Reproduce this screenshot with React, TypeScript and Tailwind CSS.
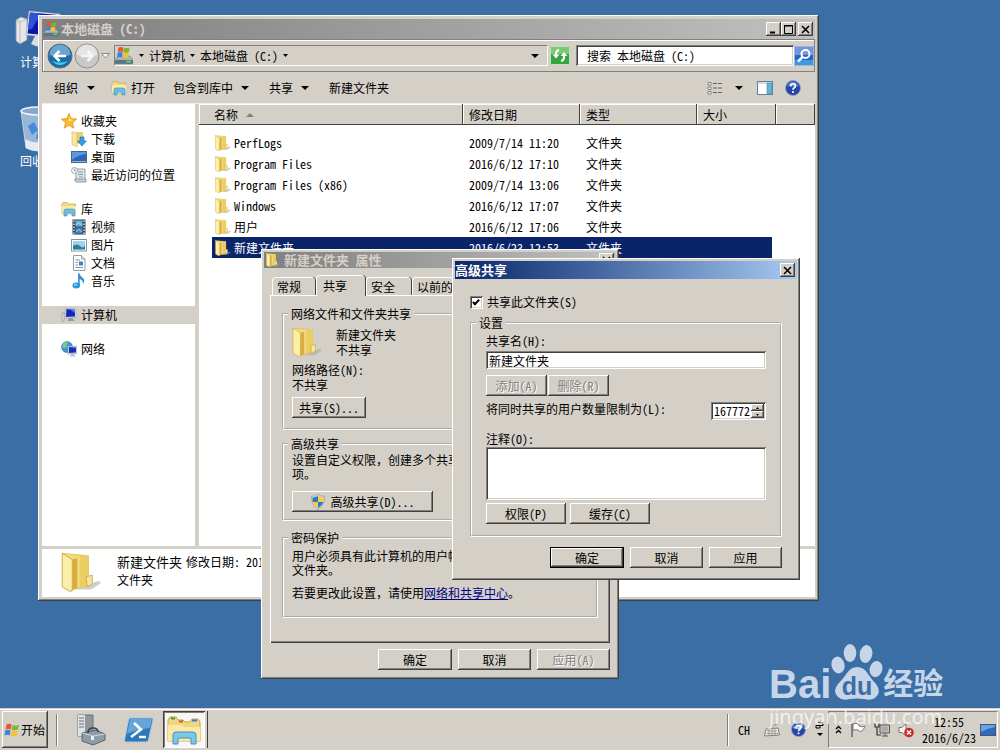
import { useState, type ReactNode } from "react"
import clsx from "clsx"

const raised = "bg-[#d4d0c8] shadow-[inset_-1px_-1px_0_#404040,inset_1px_1px_0_#ffffff,inset_-2px_-2px_0_#808080]"
const sunken = "bg-white shadow-[inset_1px_1px_0_#808080,inset_-1px_-1px_0_#ffffff,inset_2px_2px_0_#404040,inset_-2px_-2px_0_#d4d0c8]"

/* ---------- icons ---------- */

type IconProps = { className?: string }

function FolderIcon({ className = "h-4 w-4" }: IconProps) {
  return (
    <svg viewBox="0 0 32 32" className={clsx("shrink-0", className)}>
      <path d="M12 30 L30 23 L32 25 L24 30 Z" fill="#a8a8a0" opacity="0.55" />
      <path d="M1 1 L22 3 L22 27 L9 30 Z" fill="#f2db7e" stroke="#d8bc58" strokeWidth="0.6" />
      <path d="M15 3 L22 3.500 L22 27 L15 28.500 Z" fill="#eccd62" />
      <path d="M9 6 L13 5 L13 29 L8 31 Z" fill="#d9ae3e" />
      <path d="M1 1 L9 6 L9 31 L7 31.500 L1 28 Z" fill="#fbeea8" stroke="#cfae4a" strokeWidth="0.8" />
      <path d="M20 20 L25 18.500 L25 25.500 L21 28 Z" fill="#f8e69c" stroke="#c9a545" strokeWidth="0.7" />
    </svg>
  )
}

function DriveIcon({ className = "h-4 w-4" }: IconProps) {
  return (
    <svg viewBox="0 0 16 16" className={clsx("shrink-0", className)}>
      <path d="M0 11 L3 8 H13 L16 11 V15 H0 Z" fill="#a9b6bf" stroke="#6c7a85" strokeWidth="0.6" />
      <path d="M0 11.500 H16 V15 H0 Z" fill="#5f7482" />
      <path d="M10 13 H14" stroke="#5fe04a" strokeWidth="1.600" />
      <path d="M3 0.500 Q5 -0.500 7.500 0.500 L7 4.500 Q4.500 3.500 2.500 4.500 Z" fill="#e8552a" />
      <path d="M8 0.800 Q10 1.500 13 0.500 L12.300 4.600 Q9.500 5.500 7.400 4.700 Z" fill="#77b82d" />
      <path d="M2.300 5 Q4.500 4 6.800 5 L6.200 9.300 Q4 8.300 1.800 9.300 Z" fill="#3a86d8" />
      <path d="M7.300 5.200 Q9.500 6 12.200 5 L11.500 9.300 Q9 10.200 6.700 9.400 Z" fill="#f6c12b" />
    </svg>
  )
}

function LibraryIcon({ className = "h-4 w-4" }: IconProps) {
  return (
    <svg viewBox="0 0 16 16" className={clsx("shrink-0", className)}>
      <path d="M1 3 L2 1.500 H6 L7 3 H14.500 V13 H1 Z" fill="#f3da83" stroke="#c9a545" strokeWidth="0.7" />
      <path d="M1 5 H15 V13 H1 Z" fill="#fbeaa4" />
      <path d="M3 15 V10 Q3 8 5 8 H12 Q14 8 14 10 V15 H11 V12 H6 V15 Z" fill="#6cbce8" stroke="#3b8dc0" strokeWidth="0.6" />
    </svg>
  )
}

function StarIcon() {
  return (
    <svg viewBox="0 0 16 16" className="h-4 w-4 shrink-0">
      <path d="M8 0.500 L10.200 5.600 L15.700 6.100 L11.500 9.700 L12.800 15.200 L8 12.300 L3.200 15.200 L4.500 9.700 L0.300 6.100 L5.800 5.600 Z" fill="#fbb829" stroke="#d8892a" strokeWidth="0.7" />
      <path d="M8 3 L9.400 6.500 L13 7 L8 8.500 Z" fill="#ffe58a" />
    </svg>
  )
}

function DownloadsIcon() {
  return (
    <svg viewBox="0 0 16 16" className="h-4 w-4 shrink-0">
      <path d="M5 1 H12 V13 H5 Z" fill="#ecd070" />
      <path d="M1 0.500 L6 2.500 V15.500 L1 13.500 Z" fill="#fae9a0" stroke="#d3b451" strokeWidth="0.6" />
      <path d="M9 6 H13 V10 H15.500 L11 15 L6.500 10 H9 Z" fill="#3c9be0" stroke="#2268a8" strokeWidth="0.6" />
    </svg>
  )
}

function DesktopIcon() {
  return (
    <svg viewBox="0 0 16 16" className="h-4 w-4 shrink-0">
      <rect x="0.500" y="2.500" width="15" height="11" fill="#2c65b8" stroke="#52627a" />
      <path d="M1 3 H15 V5 Q7 6 1 11 Z" fill="#5b98dd" />
      <path d="M1 12.500 H15" stroke="#8eb4e0" />
    </svg>
  )
}

function RecentIcon() {
  return (
    <svg viewBox="0 0 16 16" className="h-4 w-4 shrink-0">
      <path d="M5 2 H14 V13 H5 Z" fill="#dfe8ee" stroke="#7b8b97" strokeWidth="0.8" />
      <path d="M7 5 H12 M7 7.500 H12 M8 10 H12" stroke="#7d9bb0" />
      <path d="M4 12 H15 V15 H5 Q3 14 4 12 Z" fill="#c6d3db" stroke="#7b8b97" strokeWidth="0.8" />
      <circle cx="3.500" cy="3.500" r="3" fill="#f5f8fa" stroke="#8795a0" strokeWidth="0.8" />
      <path d="M3.500 1.800 V3.600 H5" fill="none" stroke="#566" strokeWidth="0.7" />
    </svg>
  )
}

function VideoIcon() {
  return (
    <svg viewBox="0 0 16 16" className="h-4 w-4 shrink-0">
      <rect x="1.500" y="0.500" width="13" height="15" fill="#38424c" />
      <rect x="4.500" y="1.500" width="7" height="6" fill="#63b2e0" />
      <rect x="4.500" y="8.500" width="7" height="6" fill="#3b84bc" />
      <path d="M5 6 L8 3.500 L11 6.500 M5 13 L8 10.500 L11 13" stroke="#c9e5f5" fill="none" strokeWidth="0.8" />
      <path d="M3 1.500 V15 M13 1.500 V15" stroke="#dfe6ea" strokeWidth="1.400" strokeDasharray="1.500 1.500" />
    </svg>
  )
}

function PictureIcon() {
  return (
    <svg viewBox="0 0 16 16" className="h-4 w-4 shrink-0">
      <rect x="0.500" y="2.500" width="15" height="11.500" fill="#fff" stroke="#8b949b" />
      <rect x="2" y="4" width="12" height="8.500" fill="#9ed4f0" />
      <path d="M2 9 Q6 6 9 9 T14 8.500 V12.500 H2 Z" fill="#2c7f93" />
    </svg>
  )
}

function DocumentIcon() {
  return (
    <svg viewBox="0 0 16 16" className="h-4 w-4 shrink-0">
      <path d="M2.500 0.500 H10.500 L14 4 V15.500 H2.500 Z" fill="#fdfdfd" stroke="#8a9298" strokeWidth="0.9" />
      <path d="M10.500 0.500 V4 H14" fill="#dde3e7" stroke="#8a9298" strokeWidth="0.8" />
      <path d="M4.500 5 H9 M4.500 7.500 H7 M4.500 10 H7 M4.500 12.500 H12" stroke="#7b97ad" />
      <rect x="8" y="6.500" width="4" height="4" fill="#4583b8" />
    </svg>
  )
}

function MusicIcon() {
  return (
    <svg viewBox="0 0 16 16" className="h-4 w-4 shrink-0">
      <path d="M7 0.500 H8.700 Q9 3 12 5 Q14.500 7.500 12 11 Q12.500 7.500 8.700 6 V12.500 H7 Z" fill="#2e95dc" />
      <ellipse cx="5.300" cy="12.500" rx="3.800" ry="2.900" fill="#2e95dc" />
      <ellipse cx="4.500" cy="11.800" rx="1.600" ry="1" fill="#9bd4f6" />
    </svg>
  )
}

function ComputerIcon() {
  return (
    <svg viewBox="0 0 16 16" className="h-4 w-4 shrink-0">
      <path d="M1 6 L3 5 V14 L1 14.500 Z" fill="#dfe3e6" stroke="#767e84" strokeWidth="0.500" />
      <path d="M4.500 1 L15 2 V10.500 L4 11 Z" fill="#e8ecf0" stroke="#8a929a" strokeWidth="0.500" />
      <path d="M5.400 2 L14 2.800 V9.600 L5 10 Z" fill="#1526bd" />
      <path d="M9 2.400 L14 2.800 V6 Z" fill="#5a76e6" />
      <path d="M8 11 H11.500 L13.500 14 H6.500 Z" fill="#8e989f" />
    </svg>
  )
}

function NetworkIcon() {
  return (
    <svg viewBox="0 0 16 16" className="h-4 w-4 shrink-0">
      <circle cx="6" cy="6" r="5.500" fill="#3a9ad2" stroke="#22688f" strokeWidth="0.500" />
      <path d="M2 2.500 Q5 0 7 2 Q5 4 6 6 Q3 8 1 6 Z" fill="#7cc98a" />
      <path d="M7 5 L16 5.500 V12.500 L7 13 Z" fill="#dfe5ea" stroke="#7d868e" strokeWidth="0.500" />
      <path d="M8 6 L15 6.400 V11.600 L8 12 Z" fill="#1a2dc4" />
      <path d="M10 13 H13 L14.500 15.500 H9 Z" fill="#b9c2c9" />
    </svg>
  )
}

function FlagLogo({ className = "h-4 w-4" }: IconProps) {
  return (
    <svg viewBox="0 0 16 16" className={clsx("shrink-0", className)}>
      <path d="M2.500 2.500 Q5 1 7.500 2.500 L6.700 7.500 Q4 6 1.500 7.500 Z" fill="#e8582c" />
      <path d="M8.500 3 Q11 4.300 15 2.700 L14 7.500 Q11 9 7.700 7.700 Z" fill="#7fb83a" />
      <path d="M1.300 8.500 Q4 7 6.500 8.500 L5.700 13.500 Q3 12 0.500 13.500 Z" fill="#3a84d6" />
      <path d="M7.500 8.800 Q10.500 10 13.800 8.700 L12.800 13.500 Q10 15 6.700 13.800 Z" fill="#f8c22c" />
    </svg>
  )
}

function ShieldIcon() {
  return (
    <svg viewBox="0 0 16 16" className="h-4 w-4 shrink-0">
      <path d="M8 0.500 Q11 2.500 14.500 2.300 Q15 11 8 15.500 Q1 11 1.500 2.300 Q5 2.500 8 0.500 Z" fill="#d7dce0" stroke="#868e95" strokeWidth="0.6" />
      <path d="M8 2 V8 H2.700 Q2.300 5.500 2.600 3.400 Q5.500 3.500 8 2 Z" fill="#2f77c4" />
      <path d="M8 2 V8 H13.300 Q13.700 5.500 13.400 3.400 Q10.500 3.500 8 2 Z" fill="#f4cf3f" />
      <path d="M8 8 V14.200 Q3.800 11.500 2.700 8 Z" fill="#f4cf3f" />
      <path d="M8 8 V14.200 Q12.200 11.500 13.300 8 Z" fill="#2f77c4" />
    </svg>
  )
}

function HelpIcon({ className = "h-4 w-4" }: IconProps) {
  return (
    <svg viewBox="0 0 16 16" className={clsx("shrink-0", className)}>
      <circle cx="8" cy="8" r="7.500" fill="#2546a8" stroke="#8ea0c8" strokeWidth="0.8" />
      <path d="M2 6 Q4 1.500 8 1.500 T14 6 Q8 8 2 6 Z" fill="#6f8ee0" opacity="0.7" />
      <path d="M5.600 6.200 Q5.600 3.900 8 3.900 T10.400 6 Q10.400 7.300 9 8 Q8 8.600 8 9.800" fill="none" stroke="#fff" strokeWidth="1.700" />
      <circle cx="8" cy="12" r="1.100" fill="#fff" />
    </svg>
  )
}

function Caret({ className = "" }: IconProps) {
  return (
    <svg viewBox="0 0 8 4" className={clsx("h-1 w-2 shrink-0", className)}>
      <path d="M0 0 H8 L4 4 Z" fill="#000" />
    </svg>
  )
}

/* ---------- shared pieces ---------- */

type WinButtonProps = { children: ReactNode; className?: string; disabled?: boolean; primary?: boolean }

function WinButton({ children, className = "", disabled, primary }: WinButtonProps) {
  return (
    <button
      type="button"
      disabled={disabled}
      className={clsx(
        "flex h-[21px] items-center justify-center gap-1 whitespace-nowrap",
        raised,
        primary && "border border-black",
        disabled && "text-[#808080] [text-shadow:1px_1px_0_#ffffff]",
        className
      )}
    >
      {children}
    </button>
  )
}

function CaptionButton({ kind }: { kind: "min" | "max" | "close" }) {
  const labels = { min: "最小化", max: "最大化", close: "关闭" }
  return (
    <button type="button" aria-label={labels[kind]} className={clsx("flex h-[14px] w-[15px] items-center justify-center", kind === "close" && "ml-[2px]", raised)}>
      <svg viewBox="0 0 9 9" className="h-[9px] w-[9px]" fill="none" stroke="#000">
        {kind === "min" && <path d="M1 7.500 H6" strokeWidth="2" />}
        {kind === "max" && <path d="M0.500 1 H8.500 M0.500 0 V8.500 H8.500 V0 M0.500 0.500 H8.500" />}
        {kind === "close" && <path d="M1 1 L8 8 M8 1 L1 8" strokeWidth="1.600" />}
      </svg>
    </button>
  )
}

function Group({ title, className = "", children }: { title: string; className?: string; children: ReactNode }) {
  return (
    <fieldset className={clsx("min-w-0 border-2 border-white px-2 [border-style:groove]", className)}>
      <legend className="-ml-1 px-[3px] leading-[14px]">{title}</legend>
      {children}
    </fieldset>
  )
}

/* ---------- explorer window ---------- */

const tree = [
  {
    name: "收藏夹",
    icon: <StarIcon />,
    items: [
      { name: "下载", icon: <DownloadsIcon /> },
      { name: "桌面", icon: <DesktopIcon /> },
      { name: "最近访问的位置", icon: <RecentIcon /> },
    ],
  },
  {
    name: "库",
    icon: <LibraryIcon />,
    items: [
      { name: "视频", icon: <VideoIcon /> },
      { name: "图片", icon: <PictureIcon /> },
      { name: "文档", icon: <DocumentIcon /> },
      { name: "音乐", icon: <MusicIcon /> },
    ],
  },
  { name: "计算机", icon: <ComputerIcon />, items: [], selected: true },
  { name: "网络", icon: <NetworkIcon />, items: [] },
]

const files = [
  { name: "PerfLogs", date: "2009/7/14 11:20" },
  { name: "Program Files", date: "2016/6/12 17:10" },
  { name: "Program Files (x86)", date: "2009/7/14 13:06" },
  { name: "Windows", date: "2016/6/12 17:07" },
  { name: "用户", date: "2016/6/12 17:06" },
  { name: "新建文件夹", date: "2016/6/23 12:53", selected: true },
]

function AddressBar() {
  return (
    <div className="flex h-[33px] items-center border border-[#808080] pl-1 shadow-[inset_1px_1px_0_#ffffff]">
      <button type="button" aria-label="后退" className="shrink-0">
        <svg viewBox="0 0 26 26" className="h-[26px] w-[26px]">
          <circle cx="13" cy="13" r="12" fill="#1c6ea8" stroke="#5b6b78" />
          <path d="M2.500 12 A10.500 10.500 0 0 1 23.500 12 Q13 15 2.500 12 Z" fill="#6aa3cb" />
          <path d="M5 18 Q13 26 21 18 Q13 21 5 18 Z" fill="#3fd0f0" />
          <path d="M19 13 H8 M12.500 8 L7.500 13 L12.500 18" fill="none" stroke="#fff" strokeWidth="2.600" />
        </svg>
      </button>
      <button type="button" aria-label="前进" className="ml-px shrink-0">
        <svg viewBox="0 0 26 26" className="h-[26px] w-[26px]">
          <circle cx="13" cy="13" r="12" fill="#c9c9c7" stroke="#8e8e8c" />
          <path d="M2.500 12 A10.500 10.500 0 0 1 23.500 12 Q13 15 2.500 12 Z" fill="#e4e4e2" />
          <path d="M7 13 H18 M13.500 8 L18.500 13 L13.500 18" fill="none" stroke="#f6f6f6" strokeWidth="2.600" />
        </svg>
      </button>
      <svg viewBox="0 0 9 6" className="ml-px h-[6px] w-[9px] shrink-0">
        <path d="M0.500 0.500 H8.500 L4.500 5 Z" fill="#f4f4f2" stroke="#8a8a88" />
      </svg>
      <div className="ml-1 flex h-[21px] flex-1 items-center border border-[#808080] border-r-white border-b-white pr-2">
        <DriveIcon className="mr-[6px] h-[18px] w-[18px]" />
        <svg viewBox="0 0 5 3" className="h-[3px] w-[5px]"><path d="M0 0 H5 L2.500 3 Z" /></svg>
        <button type="button" className="mx-[5px]">计算机</button>
        <svg viewBox="0 0 5 3" className="h-[3px] w-[5px]"><path d="M0 0 H5 L2.500 3 Z" /></svg>
        <button type="button" className="mx-[5px]">本地磁盘 (C:)</button>
        <svg viewBox="0 0 5 3" className="h-[3px] w-[5px]"><path d="M0 0 H5 L2.500 3 Z" /></svg>
        <Caret className="ml-auto" />
      </div>
      <button type="button" aria-label="刷新" className="mx-[2px] shrink-0">
        <svg viewBox="0 0 20 19" className="h-[19px] w-5">
          <rect x="0.500" y="0.500" width="19" height="18" rx="1" fill="#35a63e" stroke="#c5e0c0" />
          <rect x="1" y="1" width="18" height="7" fill="#7cc878" />
          <path d="M9 4 Q6 4.500 6 8 V10" fill="none" stroke="#fff" strokeWidth="2" />
          <path d="M2.500 8.500 H9.500 L6 12.500 Z" fill="#fff" />
          <path d="M11 15 Q14 14.500 14 11 V9" fill="none" stroke="#fff" strokeWidth="2" />
          <path d="M10.500 10 H17.500 L14 6 Z" fill="#fff" />
        </svg>
      </button>
      <input aria-label="搜索" defaultValue="搜索 本地磁盘 (C:)" className={clsx("ml-1 h-[21px] w-[218px] px-[11px]", sunken)} />
      <button type="button" aria-label="开始搜索" className="shrink-0">
        <svg viewBox="0 0 20 20" className="h-5 w-5">
          <rect x="0.500" y="0.500" width="19" height="19" fill="#2c62c4" stroke="#9fb4d8" />
          <rect x="1" y="1" width="18" height="8" fill="#6d98dd" />
          <rect x="1" y="14" width="18" height="5" fill="#3b9be0" />
          <circle cx="11.500" cy="8" r="4" fill="none" stroke="#fff" strokeWidth="2" />
          <path d="M8.500 11 L4 15.500" stroke="#fff" strokeWidth="2.500" />
        </svg>
      </button>
    </div>
  )
}

function Toolbar() {
  return (
    <div className="flex h-[31px] items-center px-3">
      <button type="button" className="mr-4 flex items-center gap-[9px]">组织<Caret /></button>
      <button type="button" className="mr-[18px] flex items-center gap-1"><LibraryIcon />打开</button>
      <button type="button" className="mr-5 flex items-center gap-2">包含到库中<Caret /></button>
      <button type="button" className="mr-5 flex items-center gap-2">共享<Caret /></button>
      <button type="button">新建文件夹</button>
      <button type="button" className="ml-auto flex items-center gap-3" aria-label="更改视图">
        <svg viewBox="0 0 16 14" className="h-[14px] w-4">
          <path d="M1 1.500 H4 V4 H1 Z M1 6 H4 V8.500 H1 Z M1 10.500 H4 V13 H1 Z" fill="#fff" stroke="#7a8088" />
          <path d="M6 2.500 H10 M11 2.500 H15 M6 7 H10 M11 7 H15 M6 11.500 H10 M11 11.500 H15" stroke="#5f666e" />
        </svg>
        <Caret />
      </button>
      <button type="button" className="ml-[14px]" aria-label="预览窗格">
        <svg viewBox="0 0 16 14" className="h-[14px] w-4">
          <rect x="0.500" y="0.500" width="15" height="13" fill="#fff" stroke="#6c7f92" />
          <path d="M1 2 H15" stroke="#a9bccd" />
          <rect x="10" y="2" width="5" height="11" fill="#62b4d8" stroke="#4a8fb5" strokeWidth="0.6" />
        </svg>
      </button>
      <button type="button" className="mr-[2px] ml-3" aria-label="帮助"><HelpIcon /></button>
    </div>
  )
}

function HeadCell({ children, className = "" }: { children?: ReactNode; className?: string }) {
  return (
    <th scope="col" className="p-0 text-left font-normal">
      <div className={clsx("mb-[7px] flex h-[21px] items-center bg-[#d4d0c8] px-[6px] shadow-[inset_-1px_-1px_0_#404040,inset_1px_1px_0_#ffffff]", className)}>
        {children}
      </div>
    </th>
  )
}

function FileTable() {
  return (
    <table className="w-full table-fixed border-separate border-spacing-0">
      <colgroup>
        <col />
        <col className="w-[117px]" />
        <col className="w-[117px]" />
        <col className="w-[79px]" />
        <col className="w-[39px]" />
      </colgroup>
      <thead>
        <tr>
          <HeadCell className="gap-2 pl-[15px]">
            名称
            <svg viewBox="0 0 8 4" className="h-1 w-2"><path d="M0 4 H8 L4 0 Z" fill="#808080" /></svg>
          </HeadCell>
          <HeadCell>修改日期</HeadCell>
          <HeadCell>类型</HeadCell>
          <HeadCell>大小</HeadCell>
          <HeadCell />
        </tr>
      </thead>
      <tbody>
        {files.map((file) => {
          const cell = clsx("flex h-[21px] items-center px-[6px] whitespace-nowrap", file.selected && "bg-[#0a246a] text-white")
          return (
            <tr key={file.name}>
              <td className="p-0 pl-[13px]">
                <div className={clsx(cell, "gap-[3px] pl-[3px]")}><FolderIcon />{file.name}</div>
              </td>
              <td className="p-0"><div className={cell}>{file.date}</div></td>
              <td className="p-0"><div className={cell}>文件夹</div></td>
              <td className="p-0 pr-1"><div className={cell} /></td>
              <td className="p-0" />
            </tr>
          )
        })}
      </tbody>
    </table>
  )
}

function ExplorerWindow() {
  return (
    <section className={clsx("absolute top-[15px] left-[38px] flex h-[586px] w-[781px] flex-col p-1", raised)}>
      <header className="flex h-5 items-center bg-linear-to-r from-[#808080] to-[#c0c0c0] pr-[2px] pl-[2px]">
        <DriveIcon className="h-[15px] w-[15px]" />
        <h1 className="mr-auto pl-[2px] text-[13px] font-bold text-[#d4d0c8]">本地磁盘 (C:)</h1>
        <CaptionButton kind="min" />
        <CaptionButton kind="max" />
        <CaptionButton kind="close" />
      </header>
      <AddressBar />
      <Toolbar />
      <div className="flex flex-1 gap-1 border-t border-[#f0eee8]">
        <nav className="flex w-[153px] shrink-0 flex-col gap-4 bg-white pt-2">
          {tree.map((node) => (
            <ul key={node.name}>
              <li className={clsx("flex h-[18px] items-center gap-1 pl-[19px]", node.selected && "bg-[#d4d0c8]")}>
                {node.icon}
                {node.name}
              </li>
              {node.items.map((item) => (
                <li key={item.name} className="flex h-[18px] items-center gap-1 pl-[29px]">
                  {item.icon}
                  {item.name}
                </li>
              ))}
            </ul>
          ))}
        </nav>
        <div className="min-w-0 flex-1 bg-white">
          <FileTable />
        </div>
      </div>
      <footer className="mt-[3px] flex h-[48px] bg-white pl-[19px]">
        <FolderIcon className="mt-[2px] h-[42px] w-10" />
        <div className="pt-1 pl-4 leading-[18px]">
          <p className="flex gap-[4px]"><span className="text-[13px]">新建文件夹</span>修改日期: 2016/6/23 12:53</p>
          <p>文件夹</p>
        </div>
      </footer>
    </section>
  )
}

/* ---------- folder properties ---------- */

function Tab({ children, active, className = "" }: { children: ReactNode; active?: boolean; className?: string }) {
  return (
    <button
      type="button"
      role="tab"
      aria-selected={!!active}
      className={clsx(
        "rounded-t-sm border-t border-l border-white bg-[#d4d0c8] text-left whitespace-nowrap shadow-[1px_0_0_#404040]",
        active ? "z-10 -mb-px h-[21px] px-[6px]" : "h-[18px] px-1",
        className
      )}
    >
      {children}
    </button>
  )
}

function PropertiesWindow() {
  return (
    <section className={clsx("absolute top-[249px] left-[261px] w-[358px] p-[3px]", raised)}>
      <header className="flex h-4 items-center gap-1 bg-linear-to-r from-[#808080] to-[#c0c0c0] pr-[2px] pl-[2px]">
        <FolderIcon className="h-[14px] w-[14px]" />
        <h2 className="mr-auto text-[13px] font-bold text-[#d4d0c8]">新建文件夹 属性</h2>
        <CaptionButton kind="close" />
      </header>
      <div className="px-[6px] pt-[7px] pb-[6px]">
        <div role="tablist" className="flex items-end gap-px pl-[2px]">
          <Tab className="w-[43px]">常规</Tab>
          <Tab active className="w-[49px]">共享</Tab>
          <Tab className="w-[45px]">安全</Tab>
          <Tab className="w-[72px]">以前的版本</Tab>
          <Tab className="w-[48px]">自定义</Tab>
        </div>
        <div className="h-[348px] overflow-hidden px-3 pt-3 shadow-[inset_1px_1px_0_#ffffff,inset_-1px_-1px_0_#404040,inset_-2px_-2px_0_#808080]">
          <Group title="网络文件和文件夹共享" className="h-[123px]">
            <div className="flex pt-[6px]">
              <FolderIcon className="h-[30px] w-[30px]" />
              <p className="pl-[14px] leading-[15px]">新建文件夹<br />不共享</p>
            </div>
            <p className="pt-[5px] leading-[15px]">网络路径(N):<br />不共享</p>
            <WinButton className="mt-[5px] w-[74px]">共享(S)...</WinButton>
          </Group>
          <Group title="高级共享" className="mt-[7px] h-[84px]">
            <p className="pt-[2px] leading-[14px] whitespace-nowrap">设置自定义权限，创建多个共享，并设置其他选<br />项。</p>
            <WinButton className="mt-[10px] w-[141px]"><ShieldIcon />高级共享(D)...</WinButton>
          </Group>
          <Group title="密码保护" className="mt-[10px] h-[87px]">
            <p className="pt-1 leading-[14px] whitespace-nowrap">用户必须具有此计算机的用户帐户和密码才能访问<br />文件夹。</p>
            <p className="pt-[9px] leading-[14px] whitespace-nowrap">
              若要更改此设置，请使用<a href="#network" className="text-[#00007f] underline">网络和共享中心</a>。
            </p>
          </Group>
        </div>
        <div className="flex justify-end gap-[6px] pt-[6px]">
          <WinButton className="w-[74px]">确定</WinButton>
          <WinButton className="w-[73px]">取消</WinButton>
          <WinButton className="w-[73px]" disabled>应用(A)</WinButton>
        </div>
      </div>
    </section>
  )
}

/* ---------- advanced sharing dialog ---------- */

function AdvancedSharingDialog() {
  const [shared, setShared] = useState(true)

  return (
    <section role="dialog" aria-label="高级共享" className={clsx("absolute top-[258px] left-[452px] w-[348px] p-[3px]", raised)}>
      <header className="flex h-[18px] items-center bg-linear-to-r from-[#0a246a] to-[#a6caf0] pr-[2px]">
        <h2 className="mr-auto text-[13px] font-bold text-white">高级共享</h2>
        <CaptionButton kind="close" />
      </header>
      <div className="px-[15px] pt-[15px] pb-[9px]">
        <label className="flex h-4 items-center gap-1">
          <input
            type="checkbox"
            checked={shared}
            onChange={(e) => setShared(e.target.checked)}
            className={clsx(
              "h-[13px] w-[13px] appearance-none checked:before:mt-[2px] checked:before:ml-1 checked:before:block checked:before:h-[7px] checked:before:w-1 checked:before:rotate-45 checked:before:border-r-2 checked:before:border-b-2 checked:before:border-black",
              sunken
            )}
          />
          共享此文件夹(S)
        </label>
        <Group title="设置" className="mt-[6px] pb-[11px]">
          <div className="px-[6px]">
            <label htmlFor="share-name" className="mt-1 block leading-[14px]">共享名(H):</label>
            <input id="share-name" defaultValue="新建文件夹" className={clsx("mt-[3px] block h-[18px] w-full px-[3px]", sunken)} />
            <div className="mt-[6px] flex gap-px">
              <WinButton className="w-[61px]" disabled>添加(A)</WinButton>
              <WinButton className="w-[61px]" disabled>删除(R)</WinButton>
            </div>
            <div className="mt-[6px] flex justify-between">
              <label htmlFor="user-limit" className="leading-[14px]">将同时共享的用户数量限制为(L):</label>
              <div className={clsx("flex h-[18px] w-[55px] p-[2px]", sunken)}>
                <input id="user-limit" defaultValue="167772" className="w-[38px] pl-px" />
                <div className="flex flex-1 flex-col">
                  <button type="button" aria-label="增加" className={clsx("flex h-[7px] items-center justify-center", raised)}>
                    <svg viewBox="0 0 3 2" className="h-[2px] w-[3px]"><path d="M0 2 H3 L1.500 0 Z" /></svg>
                  </button>
                  <button type="button" aria-label="减少" className={clsx("flex h-[7px] items-center justify-center", raised)}>
                    <svg viewBox="0 0 3 2" className="h-[2px] w-[3px]"><path d="M0 0 H3 L1.500 2 Z" /></svg>
                  </button>
                </div>
              </div>
            </div>
            <label htmlFor="comment" className="mt-3 block leading-[14px]">注释(O):</label>
            <textarea id="comment" className={clsx("mt-px block h-[53px] w-full resize-none p-[3px]", sunken)} />
            <div className="mt-[3px] flex gap-1">
              <WinButton className="w-20">权限(P)</WinButton>
              <WinButton className="w-20">缓存(C)</WinButton>
            </div>
          </div>
        </Group>
        <div className="mt-[10px] flex justify-end gap-[6px]">
          <WinButton className="w-[74px]" primary>确定</WinButton>
          <WinButton className="w-[73px]">取消</WinButton>
          <WinButton className="w-[73px]">应用</WinButton>
        </div>
      </div>
    </section>
  )
}

/* ---------- desktop and taskbar ---------- */

function DesktopShortcuts() {
  return (
    <div className="flex w-[76px] flex-col items-center pt-[10px] text-white">
      <svg viewBox="0 0 46 44" className="h-11 w-[46px]">
        <path d="M1 10 L6 7 L12 9 V30 L5 34 L1 31 Z" fill="#e4e7ea" stroke="#8c949b" strokeWidth="0.8" />
        <path d="M5 12 V34 M1 10 L5 12 L12 9" fill="none" stroke="#a9b0b6" strokeWidth="0.8" />
        <path d="M14 1 L45 4 L43 28 L11 25 Z" fill="#e9edf1" stroke="#98a1a9" strokeWidth="0.6" />
        <path d="M15 2.500 L43 5 L41 26 L12.500 23.500 Z" fill="#0a16a8" />
        <path d="M15 2.500 L26 3.500 L17 19 L13 20 Z" fill="#3450d8" />
        <path d="M20 26 H32 L36 34 Q26 40 16 34 Z" fill="#d9dee2" />
      </svg>
      <span className="mb-9">计算机</span>
      <svg viewBox="0 0 36 46" className="h-[46px] w-9">
        <path d="M1 5 H35 L30 42 Q18 48 6 42 Z" fill="#b8d0e4" opacity="0.75" stroke="#e8f2fa" />
        <ellipse cx="18" cy="5" rx="17" ry="4" fill="#86a9c8" stroke="#eef6fc" strokeWidth="1.500" />
        <path d="M8 20 L14 16 L18 24 L12 29 Z M18 24 L26 19 L28 29 L16 33 Z" fill="#2f7fe0" opacity="0.8" />
        <path d="M5 33 Q18 40 31 33 L30 42 Q18 48 6 42 Z" fill="#eef4f8" opacity="0.85" />
      </svg>
      <span className="pt-px">回收站</span>
    </div>
  )
}

function Watermark() {
  return (
    <div className="pointer-events-none absolute right-[55px] bottom-[21px] z-20 w-[176px] text-[#c6d6e8]">
      <div className="flex h-[62px] items-end font-['Liberation_Sans','Noto_Sans_CJK_SC',sans-serif] font-bold">
        <span className="text-[40px] leading-[42px]">Bai</span>
        <svg viewBox="0 0 52 58" className="mb-[4px] h-[58px] w-[52px] shrink-0">
          <g fill="currentColor">
            <ellipse cx="7" cy="22" rx="6.500" ry="8.500" transform="rotate(-12 7 22)" />
            <ellipse cx="19" cy="10" rx="6.300" ry="9" />
            <ellipse cx="35" cy="11" rx="6.300" ry="9" transform="rotate(10 35 11)" />
            <ellipse cx="45" cy="26" rx="6.300" ry="8" transform="rotate(16 45 26)" />
            <path d="M26 24 Q33 24 37 31 Q41 37 45 41 Q51 49 44 55 Q40 58 33 56 Q26 55 19 56 Q11 58 7 54 Q1 48 7 41 Q12 36 16 30 Q20 24 26 24 Z" />
          </g>
          <text x="26" y="52" textAnchor="middle" fontSize="25" fill="#3a6ea5">du</text>
        </svg>
        <span className="text-[30px] leading-[42px] whitespace-nowrap">经验</span>
      </div>
      <div className="font-['Noto_Sans',sans-serif] text-xl leading-6 text-white/70">jingyan.baidu.com</div>
    </div>
  )
}

function Taskbar() {
  return (
    <footer className="flex h-[42px] shrink-0 items-center border-t border-[#d4d0c8] bg-[#d4d0c8] px-[2px] shadow-[inset_0_1px_0_#ffffff]">
      <button type="button" className={clsx("flex h-[37px] w-[46px] items-center gap-px pl-[2px]", raised)}>
        <FlagLogo />
        开始
      </button>
      <div className="ml-2 h-8 w-[2px] border-r border-white bg-[#808080]" />
      <button type="button" aria-label="服务器管理器" className="ml-[18px]">
        <svg viewBox="0 0 30 32" className="h-8 w-[30px]">
          <path d="M2 1 H17 V22 H2 Z" fill="#8f979c" stroke="#6a7176" />
          <path d="M2 1 H9 V22 H2 Z" fill="#dde2e5" />
          <path d="M3 4 H8 M3 7 H8 M3 10 H8 M3 13 H8" stroke="#6d757b" />
          <path d="M6 19 L20 16 L29 20 V26 L17 31 L6 27 Z" fill="#8c9daa" stroke="#56636d" />
          <path d="M6 19 L17 22 L29 20" fill="none" stroke="#c9d5dd" />
          <path d="M12 19 Q12 14 17 14 T22 18" fill="none" stroke="#39424a" strokeWidth="1.600" />
          <rect x="15" y="22" width="3" height="4" fill="#e8eef2" />
        </svg>
      </button>
      <button type="button" aria-label="PowerShell" className="ml-[18px]">
        <svg viewBox="0 0 30 26" className="h-[26px] w-[30px]">
          <path d="M6 1 H28 Q29.500 1 29 3 L24.500 23 Q24 25 22 25 H2 Q0 25 0.500 23 L4.500 3 Q5 1 6 1 Z" fill="#2f78b8" stroke="#a9cbe6" />
          <path d="M6 2 H28 L26 11 Q14 12 3 17 Z" fill="#67a5d8" />
          <path d="M10 6 L17 12.500 L7 20" fill="none" stroke="#fff" strokeWidth="2.600" />
          <path d="M15 20 H22" stroke="#fff" strokeWidth="2.400" />
        </svg>
      </button>
      <button type="button" aria-label="资源管理器" className="ml-[9px] flex h-[37px] w-[42px] items-center justify-center bg-[#f8f7f5] shadow-[inset_1px_1px_0_#404040,inset_-1px_-1px_0_#ffffff,inset_2px_2px_0_#808080,2px_0_0_#d4d0c8,3px_0_0_#404040]">
        <svg viewBox="0 0 34 30" className="h-[30px] w-[34px]">
          <path d="M1 26 V5 L3 2 H9 L11 5 H16 L18 7 H23 L25 4 H31 L33 7 V26 Z" fill="#f0d67c" stroke="#c4a24a" />
          <path d="M1 10 H15 L17 12 H33 V26 H1 Z" fill="#fae9a6" />
          <path d="M4 3.500 H8" stroke="#3c9c46" strokeWidth="2" />
          <path d="M12 6.500 H16" stroke="#d0533a" strokeWidth="2" />
          <path d="M25 5.500 H30" stroke="#3b7ccc" strokeWidth="2" />
          <path d="M6 29 V20 Q6 17 9 17 H26 Q29 17 29 20 V29 H24 V23 H11 V29 Z" fill="#7cc6ea" stroke="#3f93c2" />
        </svg>
      </button>

      <div className="ml-auto h-8 w-[2px] border-r border-white bg-[#808080]" />
      <span className="ml-[9px]">CH</span>
      <svg viewBox="0 0 16 14" className="ml-[14px] h-[14px] w-4">
        <path d="M2 6 L14 5 L15.500 12 L0.500 13 Z" fill="#e8e8e6" stroke="#808080" />
        <path d="M3 8 H13 M2.500 10.500 H14 M5 6 V12 M8 6 V12 M11 6 V12" stroke="#909090" strokeWidth="0.8" />
        <path d="M8 5 Q8 2 13 1.500" fill="none" stroke="#808080" />
      </svg>
      <HelpIcon className="ml-[11px] h-[15px] w-[15px]" />
      <svg viewBox="0 0 9 16" className="ml-[9px] h-4 w-[9px]">
        <path d="M3 0.500 H8 V3.500 H5 M1 3.500 H5 V6 H1 Z" fill="none" stroke="#000" />
        <path d="M2 11 H8 L5 14 Z" />
      </svg>
      <div className="ml-1 flex h-[37px] items-center gap-2 border border-t-[#808080] border-r-white border-b-white border-l-[#808080] pr-px pl-[6px]">
        <svg viewBox="0 0 7 9" className="h-[9px] w-[7px]" fill="none" stroke="#000" strokeWidth="1.300">
          <path d="M1 4 L3.500 1.500 L6 4 M1 8 L3.500 5.500 L6 8" />
        </svg>
        <svg viewBox="0 0 16 16" className="h-4 w-4">
          <path d="M2 1 V15" stroke="#666" strokeWidth="1.500" />
          <path d="M3 2 Q6 0.500 9 2.500 V4 Q12 5.500 15 4 Q14 8 11 9.500 Q9 9.500 8 8 Q5 7 3 8.500 Z" fill="#fff" stroke="#777" />
        </svg>
        <svg viewBox="0 0 16 16" className="h-4 w-4">
          <path d="M6 3 H15.500 V11 H6 Z" fill="#c9c9c7" stroke="#555" />
          <path d="M7.500 4.500 H14 V9.500 H7.500 Z" fill="#a9a9a7" />
          <path d="M8 14 H14 M11 11 V14" stroke="#555" />
          <path d="M1 1 V5 H5 V1 M3 5 V13 H7" fill="none" stroke="#333" strokeWidth="1.200" />
        </svg>
        <svg viewBox="0 0 16 16" className="h-4 w-4">
          <path d="M1 5.500 H4 L8 1.500 V14 L4 10.500 H1 Z" fill="#f2f2f0" stroke="#777" />
          <circle cx="11" cy="10.500" r="4.800" fill="#cf2b25" />
          <path d="M9 8.500 L13 12.500 M13 8.500 L9 12.500" stroke="#fff" strokeWidth="1.500" />
        </svg>
        <div className="text-center leading-4">
          <div>12:55</div>
          <div>2016/6/23</div>
        </div>
        <svg viewBox="0 0 16 12" className="-ml-1 h-3 w-4">
          <rect x="0.500" y="0.500" width="15" height="11" fill="#2d6ac0" stroke="#47566b" />
          <path d="M1 1 H15 V3 Q8 4 1 8 Z" fill="#67a3e2" />
        </svg>
      </div>
    </footer>
  )
}

export default function App() {
  return (
    <div className="relative flex h-screen flex-col overflow-hidden bg-[#3a6ea5] font-['Noto_Sans_Mono_CJK_SC','Noto_Sans_CJK_SC',monospace] text-xs text-black">
      <main className="relative flex-1">
        <DesktopShortcuts />
        <ExplorerWindow />
        <PropertiesWindow />
        <AdvancedSharingDialog />
      </main>
      <Taskbar />
      <Watermark />
    </div>
  )
}
